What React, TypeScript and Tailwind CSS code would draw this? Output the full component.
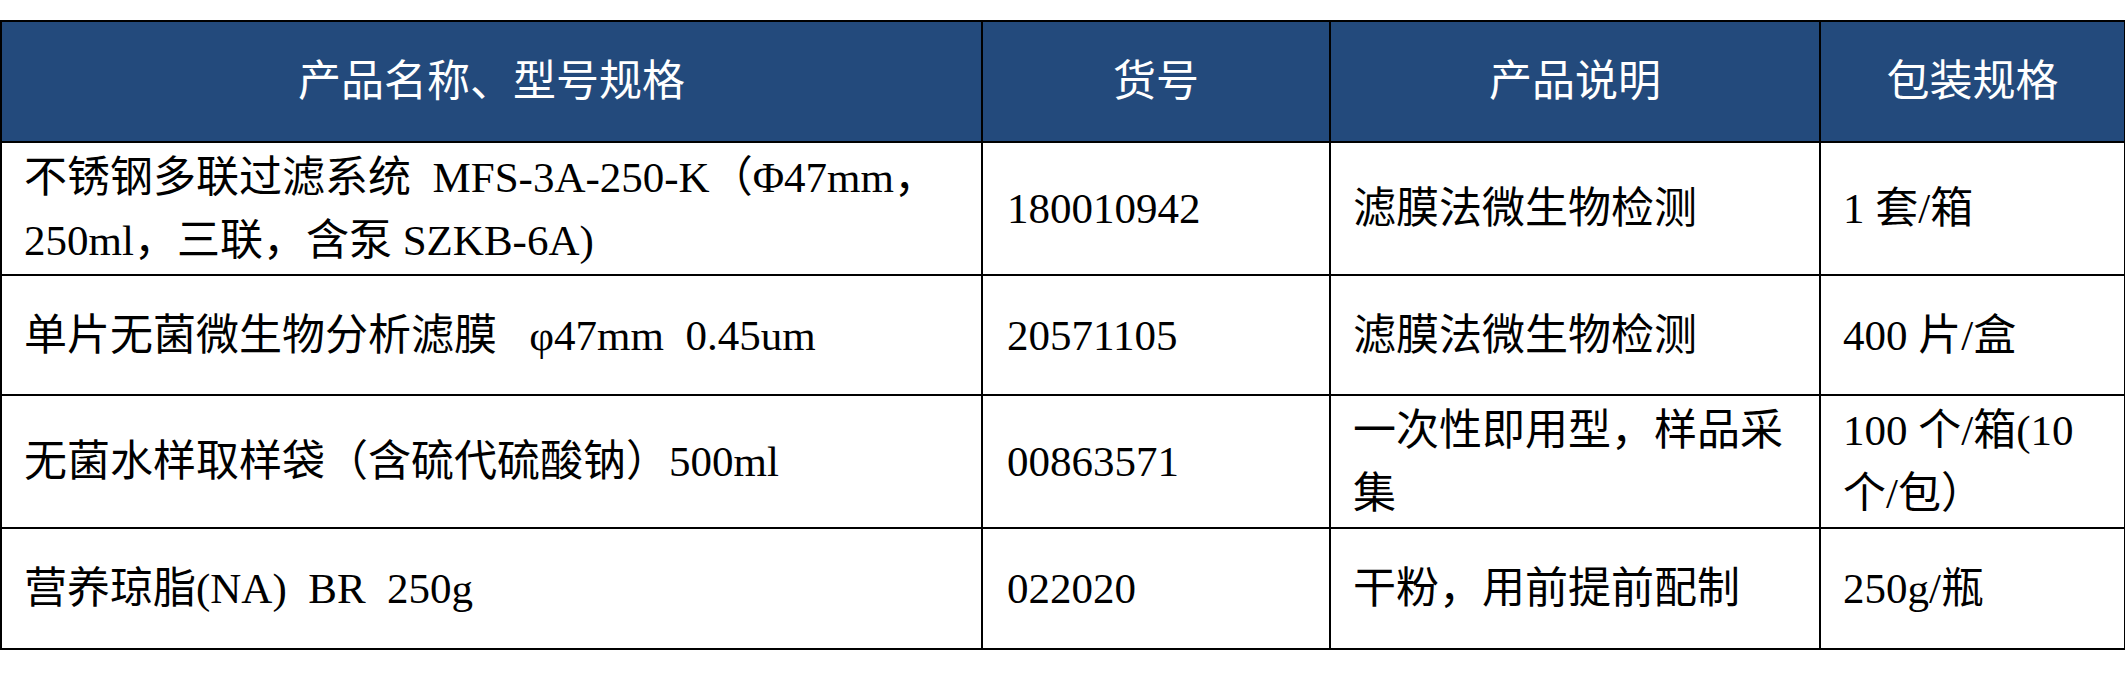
const headers = ['产品名称、型号规格', '货号', '产品说明', '包装规格']

type Row = {
  height: string
  name: React.ReactNode
  code: string
  desc: string
  pack: React.ReactNode
}

// \u2002 stands in for the half-width spaces of the original Song-style font
const rows: Row[] = [
  {
    height: 'h-[133px]',
    name: (
      <>
        不锈钢多联过滤系统{'\u2002'}MFS-3A-250-K（Φ47mm，
        <br />
        250ml，三联，含泵 SZKB-6A)
      </>
    ),
    code: '180010942',
    desc: '滤膜法微生物检测',
    pack: '1 套/箱',
  },
  {
    height: 'h-[120px]',
    name: '单片无菌微生物分析滤膜\u2002 φ47mm\u20020.45um',
    code: '20571105',
    desc: '滤膜法微生物检测',
    pack: '400 片/盒',
  },
  {
    height: 'h-[133px]',
    name: '无菌水样取样袋（含硫代硫酸钠）500ml',
    code: '00863571',
    desc: '一次性即用型，样品采集',
    pack: (
      <>
        100 个/箱(10
        <br />
        个/包）
      </>
    ),
  },
  {
    height: 'h-[121px]',
    name: '营养琼脂(NA)\u2002BR\u2002250g',
    code: '022020',
    desc: '干粉，用前提前配制',
    pack: '250g/瓶',
  },
]

export default function App() {
  return (
    <div className="min-h-screen bg-white pt-[20px] font-['Liberation_Serif','Noto_Sans_CJK_SC',serif] text-[43px] text-black">
      <table className="w-[2124px] table-fixed border-collapse">
        <colgroup>
          <col className="w-[981px]" />
          <col className="w-[348px]" />
          <col className="w-[490px]" />
          <col className="w-[305px]" />
        </colgroup>
        <thead>
          <tr className="h-[121px] bg-[#234a7c]">
            {headers.map((h) => (
              <th key={h} className="border-2 border-black px-[22px] text-center font-normal leading-[63px] text-white">
                {h}
              </th>
            ))}
          </tr>
        </thead>
        <tbody>
          {rows.map((row) => (
            <tr key={row.code} className={row.height}>
              <td className="whitespace-nowrap border-2 border-black px-[22px] leading-[63px]">{row.name}</td>
              <td className="border-2 border-black px-[24px] leading-[63px]">{row.code}</td>
              <td className="border-2 border-black px-[22px] leading-[63px]">{row.desc}</td>
              <td className="whitespace-nowrap border-2 border-black px-[22px] leading-[63px]">{row.pack}</td>
            </tr>
          ))}
        </tbody>
      </table>
    </div>
  )
}
